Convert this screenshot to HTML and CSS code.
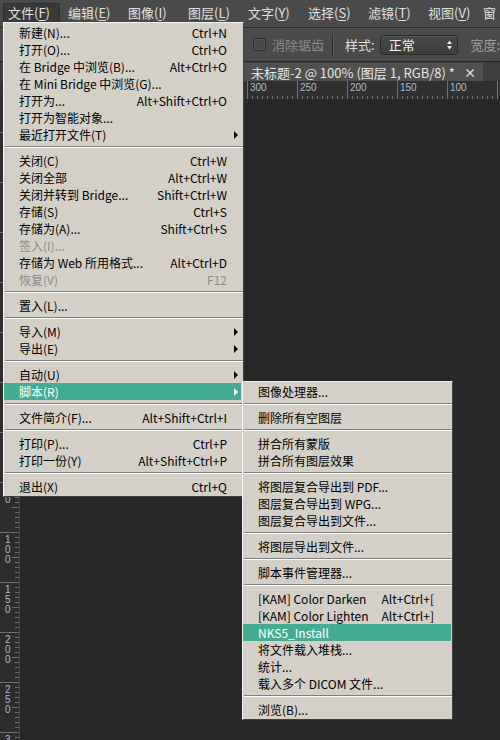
FILE: index.html
```html
<!DOCTYPE html>
<html lang="zh-CN">
<head>
<meta charset="utf-8">
<title>Photoshop 文件菜单</title>
<link rel="stylesheet" href="styles.css">
</head>
<body>
<div class="app">
  <div class="menubar">
    <div class="mb-item active">文件(<u>F</u>)</div>
    <div class="mb-item">编辑(<u>E</u>)</div>
    <div class="mb-item">图像(<u>I</u>)</div>
    <div class="mb-item">图层(<u>L</u>)</div>
    <div class="mb-item">文字(<u>Y</u>)</div>
    <div class="mb-item">选择(<u>S</u>)</div>
    <div class="mb-item">滤镜(<u>T</u>)</div>
    <div class="mb-item">视图(<u>V</u>)</div>
    <div class="mb-item last">窗</div>
  </div>

  <div class="options">
    <div class="opt-tools"></div>
    <div class="check"><span class="box"></span><span class="dim">消除锯齿</span></div>
    <span class="vsep"></span>
    <span class="lbl">样式:</span>
    <div class="select"><span>正常</span>
      <svg class="updown" width="5" height="10" viewBox="0 0 5 10"><path d="M0 4 L2.5 0.5 L5 4 Z M0 6 L2.5 9.5 L5 6 Z" fill="#e6e6e6"/></svg>
    </div>
    <span class="lbl faint">宽度:</span>
  </div>

  <div class="tabs">
    <div class="tab-spacer"></div>
    <div class="tab">未标题-2 @ 100% (图层 1, RGB/8) *<span class="x">×</span></div>
  </div>

  <div class="work">
    <div class="corner"></div>
    <div class="hruler">
      <div class="hcell"></div>
      <div class="hcell"></div>
      <div class="hcell"></div>
      <div class="hcell"></div>
      <div class="hcell">300</div>
      <div class="hcell">250</div>
      <div class="hcell">200</div>
      <div class="hcell">150</div>
      <div class="hcell">100</div>
      <div class="hcell"></div>
    </div>
    <div class="vruler">
      <div class="vcell"></div>
      <div class="vcell"></div>
      <div class="vcell"></div>
      <div class="vcell"></div>
      <div class="vcell"></div>
      <div class="vcell"></div>
      <div class="vcell"></div>
      <div class="vcell"><span>50</span></div>
      <div class="vcell"><span>100</span></div>
      <div class="vcell"><span>150</span></div>
      <div class="vcell"><span>200</span></div>
      <div class="vcell"><span>250</span></div>
      <div class="vcell"><span>3</span></div>
    </div>
    <div class="canvas"></div>
  </div>
</div>

<div class="menu main">
  <div class="mi"><span class="lab">新建(N)...</span><span class="key">Ctrl+N</span><span class="arr"></span></div>
  <div class="mi"><span class="lab">打开(O)...</span><span class="key">Ctrl+O</span><span class="arr"></span></div>
  <div class="mi"><span class="lab">在 Bridge 中浏览(B)...</span><span class="key">Alt+Ctrl+O</span><span class="arr"></span></div>
  <div class="mi"><span class="lab">在 Mini Bridge 中浏览(G)...</span><span class="key"></span><span class="arr"></span></div>
  <div class="mi"><span class="lab">打开为...</span><span class="key">Alt+Shift+Ctrl+O</span><span class="arr"></span></div>
  <div class="mi"><span class="lab">打开为智能对象...</span><span class="key"></span><span class="arr"></span></div>
  <div class="mi"><span class="lab">最近打开文件(T)</span><span class="key"></span><span class="arr"><i></i></span></div>
  <div class="sep"></div>
  <div class="mi"><span class="lab">关闭(C)</span><span class="key">Ctrl+W</span><span class="arr"></span></div>
  <div class="mi"><span class="lab">关闭全部</span><span class="key">Alt+Ctrl+W</span><span class="arr"></span></div>
  <div class="mi"><span class="lab">关闭并转到 Bridge...</span><span class="key">Shift+Ctrl+W</span><span class="arr"></span></div>
  <div class="mi"><span class="lab">存储(S)</span><span class="key">Ctrl+S</span><span class="arr"></span></div>
  <div class="mi"><span class="lab">存储为(A)...</span><span class="key">Shift+Ctrl+S</span><span class="arr"></span></div>
  <div class="mi dis"><span class="lab">签入(I)...</span><span class="key"></span><span class="arr"></span></div>
  <div class="mi"><span class="lab">存储为 Web 所用格式...</span><span class="key">Alt+Ctrl+D</span><span class="arr"></span></div>
  <div class="mi dis"><span class="lab">恢复(V)</span><span class="key">F12</span><span class="arr"></span></div>
  <div class="sep"></div>
  <div class="mi"><span class="lab">置入(L)...</span><span class="key"></span><span class="arr"></span></div>
  <div class="sep"></div>
  <div class="mi"><span class="lab">导入(M)</span><span class="key"></span><span class="arr"><i></i></span></div>
  <div class="mi"><span class="lab">导出(E)</span><span class="key"></span><span class="arr"><i></i></span></div>
  <div class="sep"></div>
  <div class="mi"><span class="lab">自动(U)</span><span class="key"></span><span class="arr"><i></i></span></div>
  <div class="mi hl"><span class="lab">脚本(R)</span><span class="key"></span><span class="arr"><i></i></span></div>
  <div class="sep"></div>
  <div class="mi"><span class="lab">文件简介(F)...</span><span class="key">Alt+Shift+Ctrl+I</span><span class="arr"></span></div>
  <div class="sep"></div>
  <div class="mi"><span class="lab">打印(P)...</span><span class="key">Ctrl+P</span><span class="arr"></span></div>
  <div class="mi"><span class="lab">打印一份(Y)</span><span class="key">Alt+Shift+Ctrl+P</span><span class="arr"></span></div>
  <div class="sep"></div>
  <div class="mi"><span class="lab">退出(X)</span><span class="key">Ctrl+Q</span><span class="arr"></span></div>
</div>

<div class="menu sub">
  <div class="mi"><span class="lab">图像处理器...</span><span class="key"></span><span class="arr"></span></div>
  <div class="sep"></div>
  <div class="mi"><span class="lab">删除所有空图层</span><span class="key"></span><span class="arr"></span></div>
  <div class="sep"></div>
  <div class="mi"><span class="lab">拼合所有蒙版</span><span class="key"></span><span class="arr"></span></div>
  <div class="mi"><span class="lab">拼合所有图层效果</span><span class="key"></span><span class="arr"></span></div>
  <div class="sep"></div>
  <div class="mi"><span class="lab">将图层复合导出到 PDF...</span><span class="key"></span><span class="arr"></span></div>
  <div class="mi"><span class="lab">图层复合导出到 WPG...</span><span class="key"></span><span class="arr"></span></div>
  <div class="mi"><span class="lab">图层复合导出到文件...</span><span class="key"></span><span class="arr"></span></div>
  <div class="sep"></div>
  <div class="mi"><span class="lab">将图层导出到文件...</span><span class="key"></span><span class="arr"></span></div>
  <div class="sep"></div>
  <div class="mi"><span class="lab">脚本事件管理器...</span><span class="key"></span><span class="arr"></span></div>
  <div class="sep"></div>
  <div class="mi"><span class="lab">[KAM] Color Darken</span><span class="key">Alt+Ctrl+[</span><span class="arr"></span></div>
  <div class="mi"><span class="lab">[KAM] Color Lighten</span><span class="key">Alt+Ctrl+]</span><span class="arr"></span></div>
  <div class="mi hl"><span class="lab">NKS5_Install</span><span class="key"></span><span class="arr"></span></div>
  <div class="mi"><span class="lab">将文件载入堆栈...</span><span class="key"></span><span class="arr"></span></div>
  <div class="mi"><span class="lab">统计...</span><span class="key"></span><span class="arr"></span></div>
  <div class="mi"><span class="lab">载入多个 DICOM 文件...</span><span class="key"></span><span class="arr"></span></div>
  <div class="sep"></div>
  <div class="mi"><span class="lab">浏览(B)...</span><span class="key"></span><span class="arr"></span></div>
</div>
</body>
</html>
```

FILE: styles.css
```css
html, body {
  margin: 0;
  padding: 0;
}
body {
  width: 500px;
  height: 740px;
  overflow: hidden;
  position: relative;
  background: #282828;
  font-family: "Noto Sans CJK SC", "Liberation Sans", sans-serif;
}

.app {
  display: flex;
  flex-direction: column;
  height: 740px;
}

/* ---------- menu bar ---------- */
.menubar {
  height: 28px;
  box-sizing: border-box;
  padding: 3px 0 0 3px;
  background: #4a4a4a;
  border-bottom: 1px solid #2a2a2a;
  display: flex;
  overflow: hidden;
  flex: 0 0 auto;
}
.mb-item {
  flex: 0 0 57px;
  margin-right: 3px;
  height: 19px;
  line-height: 19px;
  box-sizing: border-box;
  padding-left: 5px;
  font-size: 13px;
  color: #e0e0e0;
  white-space: nowrap;
}
.mb-item.last {
  flex-basis: 14px;
  padding-left: 0;
  margin-right: 0;
}
.mb-item.active {
  background: #393939;
  border: 1px solid #303030;
  border-bottom: 0;
  padding-left: 4px;
  line-height: 18px;
}
.mb-item u {
  text-underline-offset: 2px;
}

/* ---------- options bar ---------- */
.options {
  height: 34px;
  box-sizing: border-box;
  background: #4a4a4a;
  border-bottom: 1px solid #262626;
  display: flex;
  align-items: center;
  overflow: hidden;
  white-space: nowrap;
  flex: 0 0 auto;
}
.opt-tools {
  flex: 0 0 244px;
  height: 100%;
}
.check {
  display: flex;
  align-items: center;
  margin-left: 9px;
}
.box {
  width: 13px;
  height: 13px;
  box-sizing: border-box;
  border: 1px solid #2d2d2d;
  border-radius: 2px;
  background: #464646;
  box-shadow: inset 0 0 0 1px #525252;
}
.dim {
  margin-left: 6px;
  font-size: 13px;
  color: #8a8a8a;
}
.vsep {
  width: 1px;
  height: 22px;
  background: #2c2c2c;
  box-shadow: 1px 0 0 #5a5a5a;
  margin-left: 8px;
}
.lbl {
  margin-left: 12px;
  font-size: 13px;
  color: #dedede;
}
.lbl.faint {
  margin-left: 12px;
  color: #a0a0a0;
}
.select {
  width: 79px;
  height: 20px;
  margin-left: 5px;
  box-sizing: border-box;
  border: 1px solid #2b2b2b;
  border-radius: 3px;
  background: linear-gradient(#474747, #3d3d3d);
  box-shadow: inset 0 1px 0 #555;
  display: flex;
  align-items: center;
  padding-left: 8px;
  font-size: 13px;
  color: #f2f2f2;
}
.updown {
  margin-left: auto;
  margin-right: 5px;
}

/* ---------- document tabs ---------- */
.tabs {
  height: 19px;
  background: #3d3d3d;
  display: flex;
  align-items: flex-end;
  overflow: hidden;
  white-space: nowrap;
  flex: 0 0 auto;
}
.tab-spacer {
  flex: 0 0 244px;
  height: 18px;
}
.tab {
  height: 18px;
  box-sizing: border-box;
  padding: 0 7px 0 7px;
  background: #505050;
  color: #e6e6e6;
  font-size: 13px;
  display: flex;
  align-items: center;
}
.tab .x {
  margin-left: 9px;
  font-size: 12px;
  font-weight: bold;
  color: #dcdcdc;
}

/* ---------- workspace with rulers ---------- */
.work {
  flex: 1 1 auto;
  display: grid;
  grid-template-columns: 20px 1fr;
  grid-template-rows: 18px 1fr;
  min-height: 0;
}
.corner {
  background: #303030;
  border-right: 1px solid #444;
  box-sizing: border-box;
}
.hruler {
  display: flex;
  overflow: hidden;
  padding-left: 27px;
  background-color: #303030;
  background-image:
    repeating-linear-gradient(to right, #707070 0 1px, transparent 1px 5px),
    repeating-linear-gradient(to right, #707070 0 1px, transparent 1px 50px);
  background-repeat: no-repeat;
  background-size: 100% 3px, 100% 7px;
  background-position: 2px 100%, 27px 100%;
}
.hcell {
  flex: 0 0 50px;
  box-sizing: border-box;
  border-left: 1px solid #707070;
  padding: 2px 0 0 2px;
  font-family: "Liberation Sans", sans-serif;
  font-size: 10px;
  line-height: 10px;
  color: #a9bcd6;
}
.vruler {
  padding-top: 33px;
  overflow: hidden;
  border-right: 1px solid #444;
  background-color: #2d2d2d;
  background-image:
    repeating-linear-gradient(to bottom, #707070 0 1px, transparent 1px 5px),
    repeating-linear-gradient(to bottom, #707070 0 1px, transparent 1px 50px);
  background-repeat: no-repeat;
  background-size: 4px 100%, 7px 100%;
  background-position: right 0 top 3px, right 0 top 8px;
}
.vcell {
  height: 50px;
  box-sizing: border-box;
  border-top: 1px solid #707070;
  padding: 2px 0 0 5px;
}
.vcell span {
  display: block;
  width: 6px;
  word-break: break-all;
  font-family: "Liberation Sans", sans-serif;
  font-size: 10px;
  line-height: 10px;
  color: #a9bcd6;
}
.canvas {
  background: #282828;
}

/* ---------- drop-down menus ---------- */
.menu {
  position: absolute;
  box-sizing: border-box;
  background: #d4d0c8;
  border: 1px solid;
  border-color: #f4f4f4 #404040 #404040 #f4f4f4;
  padding: 1px 0;
  font-size: 12px;
  color: #000;
}
.menu.main {
  left: 3px;
  top: 22px;
  width: 241px;
}
.menu.sub {
  left: 242px;
  top: 381px;
  width: 211px;
}
.mi {
  display: flex;
  height: 17px;
  line-height: 17px;
  padding-left: 15px;
  margin-right: 2px;
  white-space: nowrap;
}
.sub .mi {
  margin-right: 1px;
}
.mi .lab {
  flex: 1 1 auto;
}
.mi .arr {
  flex: 0 0 14px;
  display: flex;
  align-items: center;
  padding-left: 7px;
  box-sizing: border-box;
}
.sub .mi .arr {
  flex-basis: 17px;
}
.mi .arr i {
  width: 0;
  height: 0;
  border-left: 4px solid #000;
  border-top: 4px solid transparent;
  border-bottom: 4px solid transparent;
}
.mi.hl {
  background: #45ac93;
  color: #fff;
}
.mi.hl .arr i {
  border-left-color: #fff;
}
.mi.dis {
  color: #8a8a8a;
}
.sep {
  height: 0;
  margin: 3px 0 4px 1px;
  border-top: 1px solid #808080;
  border-bottom: 1px solid #fff;
}
```
